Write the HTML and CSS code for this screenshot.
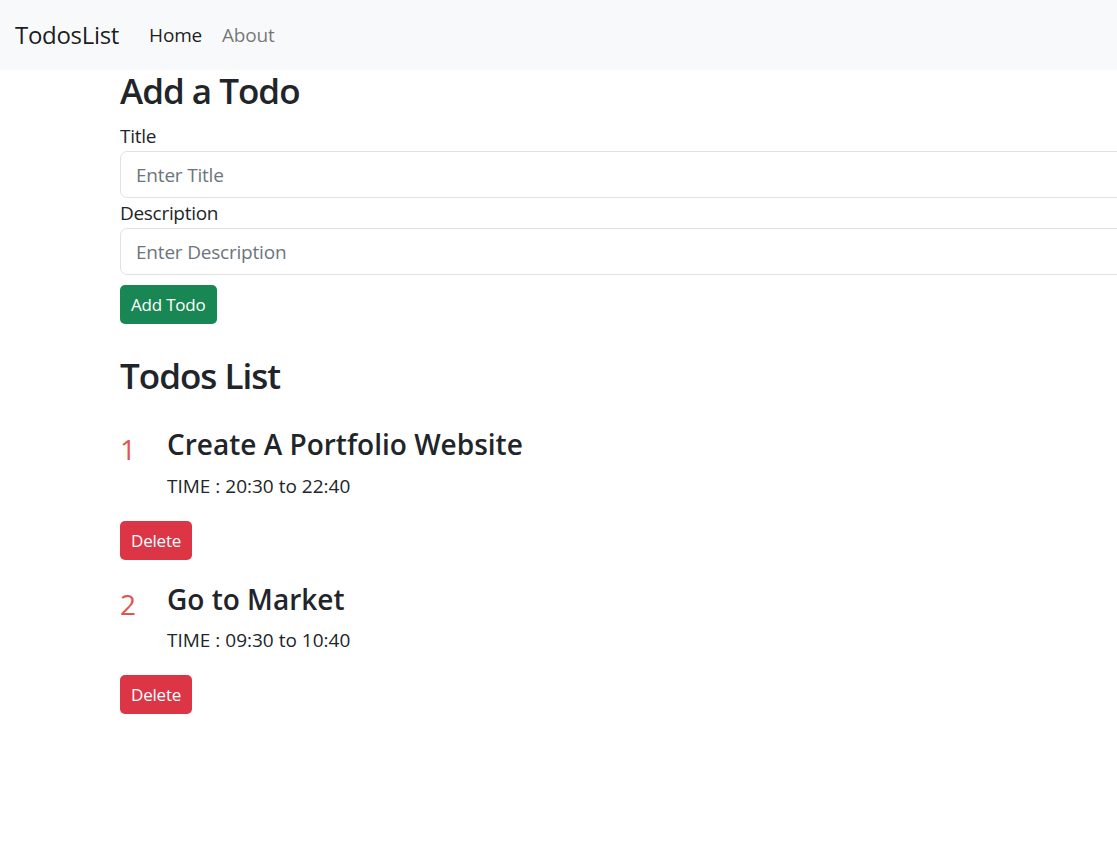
FILE: index.html
```html
<!DOCTYPE html>
<html lang="en">
<head>
<meta charset="utf-8">
<title>TodosList</title>
<link rel="stylesheet" href="styles.css">
</head>
<body>
<nav class="navbar">
  <a class="brand" href="#">TodosList</a>
  <ul class="nav">
    <li><a class="nav-link active" href="#">Home</a></li>
    <li><a class="nav-link" href="#">About</a></li>
  </ul>
</nav>
<main class="container">
  <h2 class="heading">Add a Todo</h2>
  <form class="todo-form">
    <label class="label" for="title">Title</label>
    <input class="input" id="title" type="text" placeholder="Enter Title">
    <label class="label" for="desc">Description</label>
    <input class="input" id="desc" type="text" placeholder="Enter Description">
    <button class="btn btn-success" type="button">Add Todo</button>
  </form>
  <h2 class="heading list-heading">Todos List</h2>
  <div class="todo">
    <div class="todo-row">
      <span class="todo-num">1</span>
      <div class="todo-body">
        <h4 class="todo-title">Create A Portfolio Website</h4>
        <p class="todo-time">TIME : 20:30 to 22:40</p>
      </div>
    </div>
    <button class="btn btn-danger" type="button">Delete</button>
  </div>
  <div class="todo">
    <div class="todo-row">
      <span class="todo-num">2</span>
      <div class="todo-body">
        <h4 class="todo-title">Go to Market</h4>
        <p class="todo-time">TIME : 09:30 to 10:40</p>
      </div>
    </div>
    <button class="btn btn-danger" type="button">Delete</button>
  </div>
</main>
</body>
</html>
```

FILE: styles.css
```css
html, body {
  margin: 0;
  padding: 0;
}
body {
  font-family: "Open Sans", "Noto Sans", sans-serif;
  font-size: 20px;
  line-height: 1.5;
  color: #212529;
  background: #fff;
  overflow: hidden;
  width: 1117px;
  height: 849px;
}
.navbar {
  height: 70px;
  box-sizing: border-box;
  background: #f8f9fa;
  display: flex;
  align-items: center;
  padding: 0 15px;
}
.brand {
  font-size: 24px;
  color: rgba(0,0,0,0.9);
  text-decoration: none;
  margin-right: 20px;
  letter-spacing: -0.3px;
}
.nav {
  list-style: none;
  display: flex;
  margin: 0;
  padding: 0;
}
.nav-link {
  display: block;
  padding: 0 10px;
  font-size: 19px;
  color: rgba(0,0,0,0.55);
  text-decoration: none;
  letter-spacing: -0.2px;
}
.nav-link.active {
  color: rgba(0,0,0,0.9);
}
.container {
  padding-left: 120px;
}
.heading {
  margin: 0 0 9px;
  font-size: 35px;
  font-weight: 600;
  line-height: 1.2;
  letter-spacing: -1px;
}
.todo-form {
  display: flex;
  flex-direction: column;
  align-items: flex-start;
}
.label {
  display: block;
  line-height: 30px;
  font-size: 19px;
  letter-spacing: -0.3px;
}
.input {
  display: block;
  width: 1120px;
  height: 47px;
  box-sizing: border-box;
  border: 1px solid #dee2e6;
  border-radius: 7px;
  padding: 0 15px;
  font: inherit;
  font-size: 19px;
  color: #212529;
  letter-spacing: -0.2px;
}
.input::placeholder {
  color: #6c757d;
}
.btn {
  font-family: inherit;
  font-size: 17px;
  line-height: 27px;
  padding: 5px 10px;
  border: 1px solid transparent;
  border-radius: 5px;
  color: #fff;
  letter-spacing: -0.2px;
  cursor: pointer;
}
.btn-success {
  background: #198754;
  margin-top: 10px;
}
.btn-danger {
  background: #dc3545;
  margin-top: 20px;
}
.list-heading {
  margin-top: 31px;
  margin-bottom: 31px;
}
.todo {
  margin-bottom: 23px;
}
.todo-row {
  display: flex;
  align-items: flex-start;
}
.todo-num {
  width: 47px;
  flex: none;
  font-size: 28px;
  font-weight: 400;
  line-height: 42px;
  color: #e25450;
  padding-left: 0;
  box-sizing: border-box;
}
.todo-body {
  flex: 1;
}
.todo-title {
  margin: 0 0 9px;
  font-size: 28px;
  font-weight: 600;
  line-height: 1.2;
}
.todo-time {
  margin: 0;
  line-height: 30px;
  font-size: 19px;
}
```
